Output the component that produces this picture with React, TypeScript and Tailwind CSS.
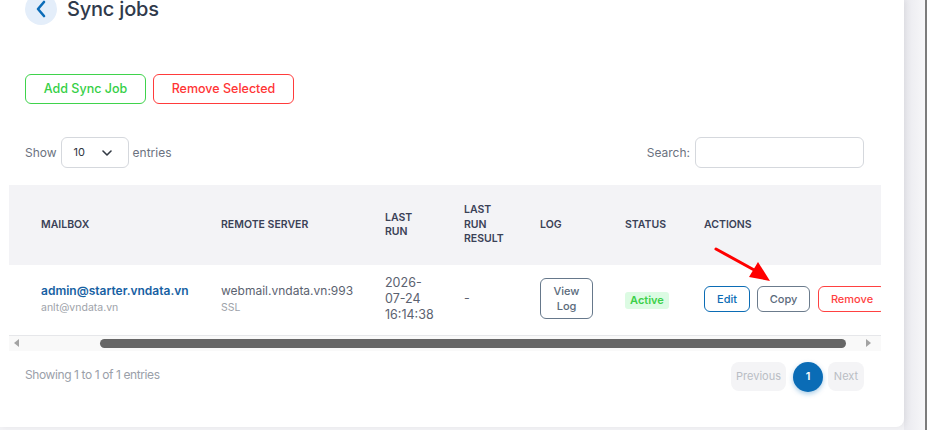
import React from "react";

const font = { fontFamily: "Inter, 'Noto Sans', sans-serif" };

function BackButton() {
  return (
    <div className="flex h-8 w-8 items-center justify-center rounded-full bg-[#e4eefa]">
      <svg width="12" height="18" viewBox="0 0 12 18" fill="none">
        <path d="M9 2 L3 9 L9 16" stroke="#0b6cb8" strokeWidth="2.6" strokeLinecap="round" strokeLinejoin="round" />
      </svg>
    </div>
  );
}

function Chevron() {
  return (
    <svg width="10" height="6" viewBox="0 0 10 6" fill="none">
      <path d="M1 1 L5 5 L9 1" stroke="#333a44" strokeWidth="1.6" strokeLinecap="round" strokeLinejoin="round" />
    </svg>
  );
}

function HeadCell({ children, className = "" }: { children: React.ReactNode; className?: string }) {
  return (
    <th className={`pl-4 text-left align-middle text-[10.5px] font-semibold uppercase leading-[14.5px] text-[#3a4156] ${className}`}>
      {children}
    </th>
  );
}

export default function App() {
  return (
    <div className="flex h-[430px] w-[927px] overflow-hidden bg-[#f3f3f6]" style={font}>
      {/* page card */}
      <div className="relative h-[427px] w-[904px] shrink-0 rounded-br-lg bg-white shadow-[2px_0_6px_rgba(0,0,0,0.06)]">
        {/* heading */}
        <div className="-mt-[7px] flex items-center gap-[10px] pl-[25px]">
          <BackButton />
          <h1 className="text-[20px] font-medium leading-none tracking-[-0.2px] text-[#303a4b]">Sync jobs</h1>
        </div>

        {/* toolbar */}
        <div className="mt-[49px] flex gap-[7px] pl-[25px]">
          <button className="h-[30px] w-[121px] rounded-md border border-[#3fd34c] text-[12.5px] font-medium text-[#35cf46]">
            Add Sync Job
          </button>
          <button className="h-[30px] w-[141px] rounded-md border border-[#ff3b3b] text-[12.5px] font-medium text-[#ff3535]">
            Remove Selected
          </button>
        </div>

        {/* length + search */}
        <div className="mt-[33px] flex items-center justify-between pl-[25px] pr-[40px]">
          <div className="flex items-center gap-[4px] text-[12px] text-[#6b7280]">
            <span>Show</span>
            <div className="flex h-[31px] w-[68px] items-center justify-between rounded-md border border-[#d5d8dd] pl-[12px] pr-[16px]">
              <span className="text-[11px] text-[#2f3440]">10</span>
              <Chevron />
            </div>
            <span>entries</span>
          </div>
          <div className="flex items-center gap-[5px] text-[12px] text-[#6b7280]">
            <span>Search:</span>
            <div className="h-[31px] w-[169px] rounded-md border border-[#d5d8dd]" />
          </div>
        </div>

        {/* table */}
        <div className="ml-[9px] mt-[17px] w-[872px] overflow-hidden">
          <table className="w-[900px] table-fixed border-collapse">
            <colgroup>
              <col className="w-[196px]" />
              <col className="w-[164px]" />
              <col className="w-[79px]" />
              <col className="w-[76px]" />
              <col className="w-[85px]" />
              <col className="w-[79px]" />
              <col className="w-[221px]" />
            </colgroup>
            <thead>
              <tr className="h-[80px] bg-[#f3f3f6]">
                <HeadCell className="pl-[32px]">Mailbox</HeadCell>
                <HeadCell>Remote Server</HeadCell>
                <HeadCell>Last<br />Run</HeadCell>
                <HeadCell>Last<br />Run<br />Result</HeadCell>
                <HeadCell>Log</HeadCell>
                <HeadCell>Status</HeadCell>
                <HeadCell>Actions</HeadCell>
              </tr>
            </thead>
            <tbody>
              <tr className="h-[70px] border-b border-[#e6e7ea] align-middle">
                <td className="pb-[2px] pl-[32px]">
                  <div className="text-[12px] font-semibold leading-[18px] text-[#1761a3]">admin@starter.vndata.vn</div>
                  <div className="text-[10.5px] leading-[16px] text-[#9ea3aa]">anlt@vndata.vn</div>
                </td>
                <td className="pb-[2px] pl-4">
                  <div className="text-[12px] leading-[18px] text-[#5b6270]">webmail.vndata.vn:993</div>
                  <div className="text-[10.5px] leading-[16px] text-[#9ea3aa]">SSL</div>
                </td>
                <td className="pb-[2px] pl-4 text-[12.5px] leading-[16px] text-[#5b6270]">
                  2026-<br />07-24<br />16:14:38
                </td>
                <td className="pb-[2px] pl-4 text-[12.5px] text-[#5b6270]">-</td>
                <td className="pb-[2px] pl-4">
                  <button className="flex h-[41px] w-[53px] flex-col items-center justify-center rounded-md border border-[#66788b] text-[11px] font-medium leading-[15px] text-[#5a6a7b]">
                    <span>View</span>
                    <span>Log</span>
                  </button>
                </td>
                <td className="pb-[3px] pl-4">
                  <span className="inline-flex h-[17px] w-[44px] items-center justify-center rounded-[3px] bg-[#dcfbe3] text-[11px] font-semibold text-[#3bd049]">
                    Active
                  </span>
                </td>
                <td className="pb-[2px] pl-4">
                  <div className="flex items-center gap-[7px]">
                    <button className="h-[26px] w-[46px] rounded-md border border-[#0b6cb5] text-[11px] font-medium text-[#0b6cb5]">
                      Edit
                    </button>
                    <button className="h-[26px] w-[53px] rounded-md border border-[#6b7b8c] text-[11px] font-medium text-[#5a6a7b]">
                      Copy
                    </button>
                    <button className="ml-[1px] h-[26px] w-[68px] rounded-md border border-[#ff4141] text-[11px] font-medium text-[#ff4141]">
                      Remove
                    </button>
                  </div>
                </td>
              </tr>
            </tbody>
          </table>

          {/* horizontal scrollbar */}
          <div className="flex h-[15px] items-center bg-[#f9f9f9]">
            <div className="flex w-[14px] justify-center">
              <svg width="5" height="8" viewBox="0 0 5 8">
                <path d="M5 0 L0 4 L5 8 Z" fill="#a3a3a3" />
              </svg>
            </div>
            <div className="ml-[77px] h-[9px] w-[746px] rounded-full bg-[#666666]" />
            <div className="ml-auto mr-[6px] flex w-[14px] justify-center">
              <svg width="5" height="8" viewBox="0 0 5 8">
                <path d="M0 0 L5 4 L0 8 Z" fill="#a3a3a3" />
              </svg>
            </div>
          </div>
        </div>

        {/* footer */}
        <div className="mt-[11px] flex items-center justify-between pl-[25px] pr-[40px]">
          <span className="-mt-[4px] text-[12px] tracking-[-0.4px] text-[#9aa0a9]">Showing 1 to 1 of 1 entries</span>
          <div className="flex items-center">
            <span className="flex h-[29px] w-[55px] items-center justify-center rounded-lg bg-[#f4f4f6] text-[11px] text-[#b9bdc4]">
              Previous
            </span>
            <span className="ml-[7px] flex h-[30px] w-[30px] items-center justify-center rounded-full bg-[#0a6cb6] text-[11px] font-semibold text-white shadow-[0_2px_5px_rgba(10,108,182,0.35)]">
              1
            </span>
            <span className="ml-[5px] flex h-[29px] w-[36px] items-center justify-center rounded-lg bg-[#f4f4f6] text-[11px] text-[#b9bdc4]">
              Next
            </span>
          </div>
        </div>

        {/* annotation arrow */}
        <svg className="absolute left-[710px] top-[244px]" width="70" height="44" viewBox="0 0 70 44" fill="none">
          <line x1="6" y1="5" x2="46" y2="27" stroke="#ff0000" strokeWidth="3" strokeLinecap="round" />
          <path d="M60 37 L39 33 L48 18 Z" fill="#ff0000" />
        </svg>
      </div>

      {/* right gutter */}
      <div className="h-full flex-1 bg-gradient-to-r from-[#e9e9ee] to-[#f7f7f9]" />
      <div className="h-full w-[2px] bg-[#7c7c7c]" />
    </div>
  );
}
